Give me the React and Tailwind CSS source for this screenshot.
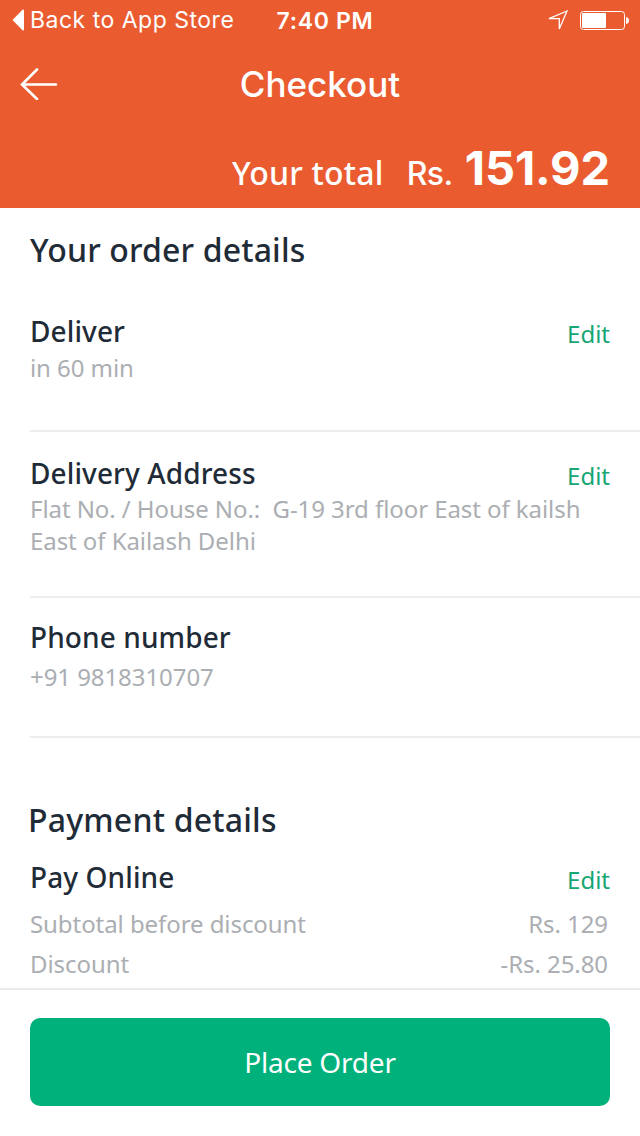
const StatusBar = () => {
  return (
    <div className="grid h-10 grid-cols-[1fr_auto_1fr] items-center pl-3 pr-[11px] font-['Inter',sans-serif] text-white">
      <div className="flex items-center gap-1.5">
        <svg width="12" height="22" viewBox="0 0 12 22" fill="currentColor">
          <path d="M0.5 11 10.5 0.8Q12 0 12 1.5V20.5Q12 22 10.5 21.2Z" />
        </svg>
        <span className="whitespace-nowrap text-[23px] leading-7 tracking-[0.5px]">
          Back to App Store
        </span>
      </div>
      <span className="pl-[9px] pt-px text-[23px] font-semibold leading-7 tracking-[0.7px]">
        7:40 PM
      </span>
      <div className="flex items-center justify-end gap-3">
        <svg width="20" height="20" viewBox="0 0 20 20" fill="none" stroke="currentColor" strokeWidth="1.3">
          <path d="M19 1 1 8.7H11.3V19Z" />
        </svg>
        <svg className="mt-px" width="49" height="20" viewBox="0 0 49 20" fill="none">
          <rect x="0.5" y="0.5" width="44" height="18" rx="3" stroke="currentColor" />
          <rect x="2" y="2" width="24" height="15" rx="1" fill="currentColor" />
          <path d="M46 6Q49 6.5 49 9.5T46 13Z" fill="currentColor" />
        </svg>
      </div>
    </div>
  );
};

const Header = () => {
  return (
    <header className="h-[208px] shrink-0 bg-[#ea5c30] text-white">
      <StatusBar />
      <div className="grid h-[88px] grid-cols-[80px_1fr_80px] items-center">
        <button type="button" aria-label="Back" className="pl-5">
          <svg width="38" height="32" viewBox="0 0 38 32" fill="none" stroke="currentColor" strokeWidth="2.6" strokeLinecap="round">
            <path d="M17 1.5 2 16.5 17 31M2 16.5H36" />
          </svg>
        </button>
        <h1 className="text-center font-['Inter',sans-serif] text-[35px] font-[550] leading-10">
          Checkout
        </h1>
      </div>
      <div className="flex items-baseline justify-end pr-[30px] pt-3">
        <span className="whitespace-nowrap font-['Noto_Sans',sans-serif] text-[32px] font-medium leading-[56px] tracking-[0.2px]">
          Your total
        </span>
        <span className="ml-[23px] font-['Inter',sans-serif] text-[32px] font-[550] leading-[56px] tracking-[-0.5px]">
          Rs.
        </span>
        <span className="ml-3 font-['Inter',sans-serif] text-[47px] font-bold leading-[56px] tracking-[-0.1px]">
          151.92
        </span>
      </div>
    </header>
  );
};

const EditButton = () => (
  <button type="button" className="mt-[7px] text-2xl leading-8 text-[#17a673]">
    Edit
  </button>
);

const Row = ({ title, editable, className, children }) => {
  return (
    <section className={className}>
      <div className="flex items-start justify-between pr-[30px]">
        <h3 className="text-[28px] font-medium leading-10 tracking-[0.1px]">{title}</h3>
        {editable && <EditButton />}
      </div>
      {children}
    </section>
  );
};

const charges = [
  { label: "Subtotal before discount", amount: "Rs. 129" },
  { label: "Discount", amount: "-Rs. 25.80" },
];

const App = () => {
  return (
    <div className="flex h-[1136px] w-[640px] flex-col overflow-hidden bg-white font-['Noto_Sans',sans-serif] text-[#1f2c38]">
      <Header />

      <main className="flex-1 overflow-hidden pl-[30px] pt-5">
        <h2 className="text-[32px] font-medium leading-[44px] tracking-[0.15px]">
          Your order details
        </h2>

        <Row title="Deliver" editable className="mt-[39px] h-[121px] border-b-2 border-[#ededee]">
          <p className="mt-px text-2xl leading-8 tracking-[-0.07px] text-[#abaeb2]">in 60 min</p>
        </Row>

        <Row title="Delivery Address" editable className="h-[166px] border-b-2 border-[#ededee] pt-[21px]">
          <p className="whitespace-pre text-2xl leading-8 tracking-[-0.07px] text-[#abaeb2]">
            {"Flat No. / House No.:  G-19 3rd floor East of kailsh\nEast of Kailash Delhi"}
          </p>
        </Row>

        <Row title="Phone number" className="h-[140px] border-b-2 border-[#ededee] pt-[19px]">
          <p className="mt-1 text-2xl leading-8 tracking-[-0.07px] text-[#abaeb2]">
            +91 9818310707
          </p>
        </Row>

        <h2 className="-ml-0.5 mt-[60px] text-[32px] font-medium leading-[44px] tracking-[0.2px]">
          Payment details
        </h2>

        <Row title="Pay Online" editable className="mt-[15px]">
          <div className="mt-[11px] flex flex-col gap-2 pr-8 text-2xl leading-8 tracking-[-0.07px] text-[#abaeb2]">
            {charges.map((item) => (
              <div key={item.label} className="flex justify-between">
                <span>{item.label}</span>
                <span>{item.amount}</span>
              </div>
            ))}
          </div>
        </Row>
      </main>

      <footer className="h-[148px] shrink-0 border-t-2 border-[#ebebec] px-[30px] pt-7">
        <button type="button" className="h-[88px] w-full rounded-[10px] bg-[#00b17b] text-[28px] tracking-[-0.2px] text-white">
          Place Order
        </button>
      </footer>
    </div>
  );
};

export default App;
